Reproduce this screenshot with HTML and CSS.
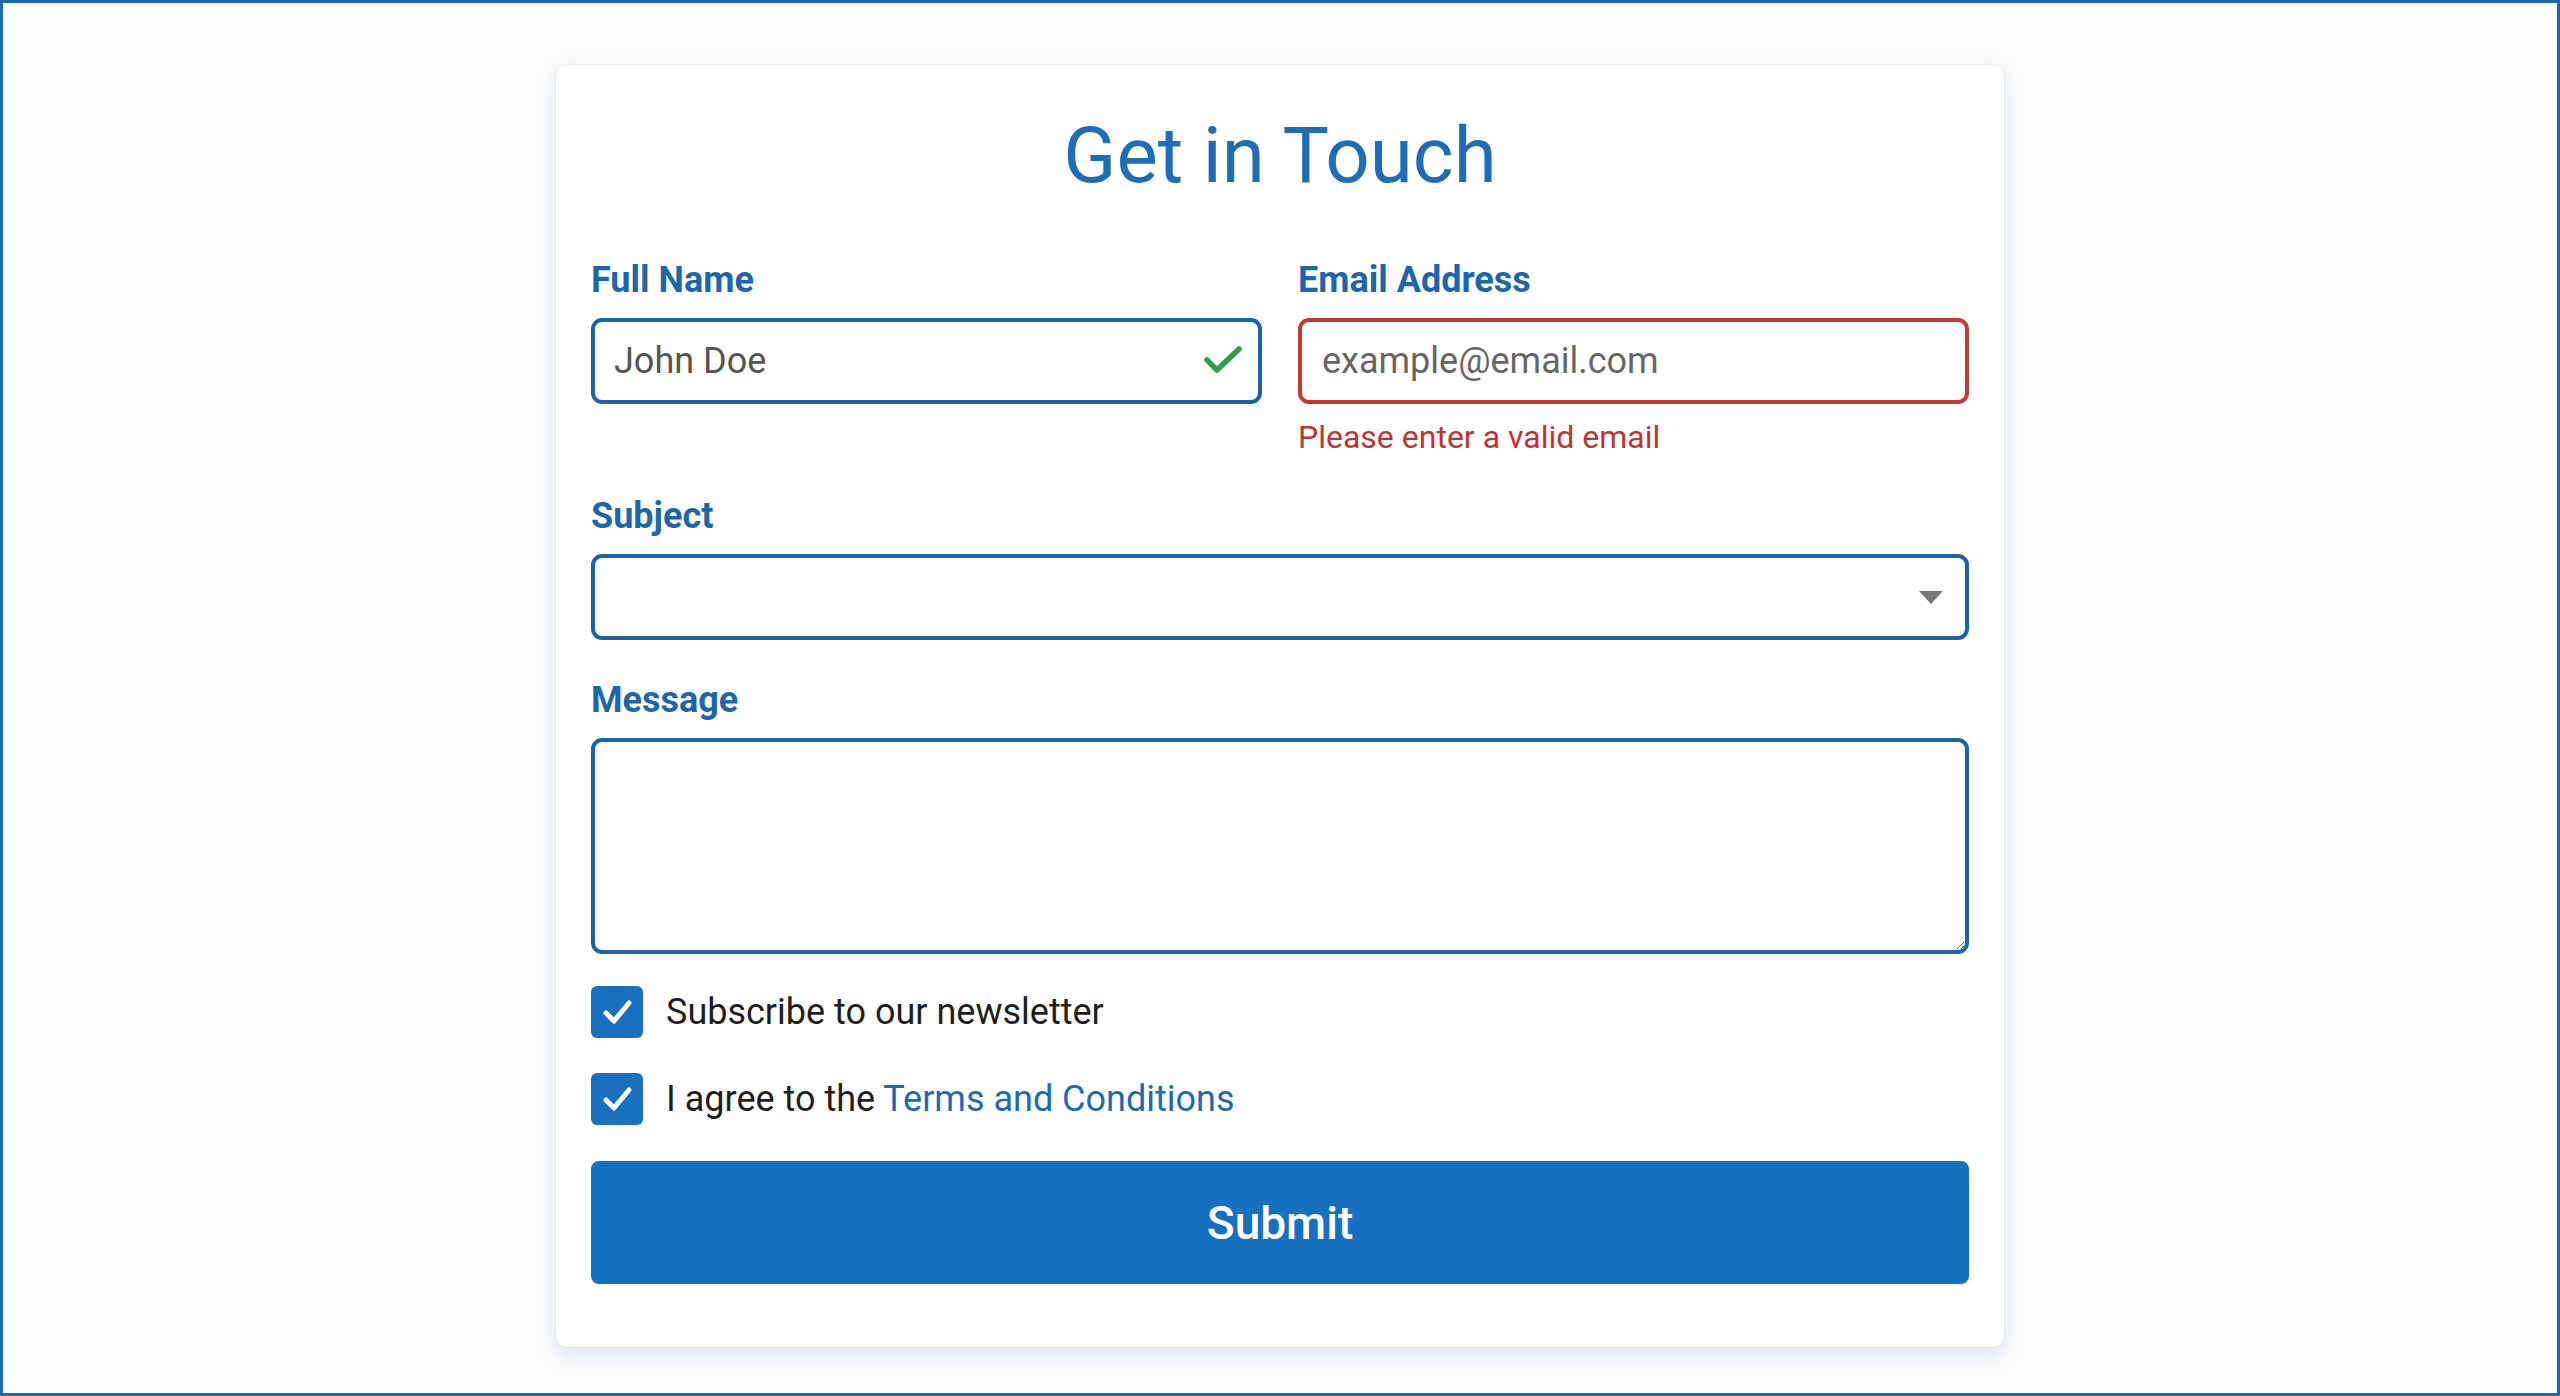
FILE: index.html
```html
<!DOCTYPE html>
<html lang="en">
<head>
<meta charset="utf-8">
<title>Get in Touch</title>
<link rel="stylesheet" href="styles.css">
</head>
<body>
<div class="page">
  <form class="card" onsubmit="return false">
    <h1 class="title">Get in Touch</h1>
    <div class="row">
      <div class="field">
        <label class="label" for="name">Full Name</label>
        <div class="control">
          <input class="input input-valid" id="name" type="text" value="John Doe">
          <svg class="valid-icon" width="38" height="28" viewBox="0 0 38 28" aria-hidden="true">
            <polyline points="3,14 13,24 35,3" fill="none" stroke="#2f9d4b" stroke-width="5.5" stroke-linecap="round" stroke-linejoin="round"/>
          </svg>
        </div>
      </div>
      <div class="field">
        <label class="label" for="email">Email Address</label>
        <input class="input input-invalid" id="email" type="email" placeholder="example@email.com">
        <div class="error">Please enter a valid email</div>
      </div>
    </div>
    <div class="field field-gap">
      <label class="label" for="subject">Subject</label>
      <div class="control">
        <select class="input select" id="subject">
          <option value=""></option>
        </select>
        <svg class="select-arrow" width="26" height="15" viewBox="0 0 26 15" aria-hidden="true">
          <polygon points="1,1 25,1 13,14" fill="#787878"/>
        </svg>
      </div>
    </div>
    <div class="field">
      <label class="label" for="message">Message</label>
      <textarea class="input textarea" id="message"></textarea>
    </div>
    <label class="check check-first">
      <span class="box"><svg width="52" height="52" viewBox="0 0 52 52" aria-hidden="true"><polyline points="15,27 23,35 38,17" fill="none" stroke="#ffffff" stroke-width="5" stroke-linecap="round" stroke-linejoin="round"/></svg></span>
      <span class="check-text">Subscribe to our newsletter</span>
    </label>
    <label class="check">
      <span class="box"><svg width="52" height="52" viewBox="0 0 52 52" aria-hidden="true"><polyline points="15,27 23,35 38,17" fill="none" stroke="#ffffff" stroke-width="5" stroke-linecap="round" stroke-linejoin="round"/></svg></span>
      <span class="check-text">I agree to the <a class="link" href="#">Terms and Conditions</a></span>
    </label>
    <button class="submit" type="submit">Submit</button>
  </form>
</div>
</body>
</html>
```
FILE: styles.css
```css
* { box-sizing: border-box; }

html, body {
  margin: 0;
  padding: 0;
}

body {
  font-family: Roboto, "Liberation Sans", Arial, sans-serif;
  background: #fbfcfd;
}

.page {
  height: 100vh;
  border: 3px solid #1d69ad;
  padding-top: 62px;
  display: flex;
  justify-content: center;
  align-items: flex-start;
  background: #fbfcfd;
}

.card {
  width: 1448px;
  background: #ffffff;
  border-radius: 10px;
  padding: 43px 35px 63px;
  display: flex;
  flex-direction: column;
  box-shadow: 0 0 0 1px rgba(30, 80, 140, 0.05), 0 8px 22px rgba(30, 80, 140, 0.13);
}

.title {
  margin: 0 0 55px;
  font-size: 78px;
  line-height: 96px;
  font-weight: 400;
  color: #1f6db5;
  text-align: center;
}

.row {
  display: grid;
  grid-template-columns: 1fr 1fr;
  column-gap: 36px;
  align-items: start;
  margin-bottom: 39px;
}

.field {
  display: flex;
  flex-direction: column;
}

.field-gap {
  margin-bottom: 39px;
}

.label {
  display: block;
  font-size: 36px;
  line-height: 42px;
  font-weight: 700;
  color: #1d66aa;
  margin-bottom: 17px;
}

.control {
  position: relative;
}

.input {
  display: block;
  width: 100%;
  height: 86px;
  border: 4px solid #1c64a6;
  border-radius: 11px;
  background: #ffffff;
  padding: 0 19px;
  font-family: Roboto, "Liberation Sans", Arial, sans-serif;
  font-size: 36px;
  color: #555555;
  outline: none;
}

.input::placeholder {
  color: #666666;
  opacity: 1;
}

.input-invalid {
  border-color: #c13a35;
  padding-left: 20px;
}

.valid-icon {
  position: absolute;
  right: 20px;
  top: 28px;
}

.error {
  margin-top: 14px;
  font-size: 32px;
  line-height: 38px;
  color: #be3430;
}

.select {
  appearance: none;
  -webkit-appearance: none;
  cursor: pointer;
}

.select-arrow {
  position: absolute;
  right: 25px;
  top: 36px;
  pointer-events: none;
}

.textarea {
  height: 216px;
  resize: both;
  padding: 16px 19px;
}

.check {
  display: flex;
  align-items: center;
  gap: 23px;
  height: 52px;
  margin-top: 35px;
  cursor: pointer;
}

.check-first {
  margin-top: 32px;
}

.box {
  width: 52px;
  height: 52px;
  flex: 0 0 52px;
  background: #1a6fbf;
  border-radius: 6px;
  display: flex;
}

.check-text {
  font-size: 36px;
  line-height: 42px;
  color: #1e1e1e;
}

.link {
  color: #1f6aae;
  text-decoration: none;
}

.submit {
  margin-top: 36px;
  height: 123px;
  width: 100%;
  border: none;
  border-radius: 8px;
  background: #1570c0;
  color: #ffffff;
  font-family: Roboto, "Liberation Sans", Arial, sans-serif;
  font-size: 46px;
  font-weight: 500;
  cursor: pointer;
}
```
